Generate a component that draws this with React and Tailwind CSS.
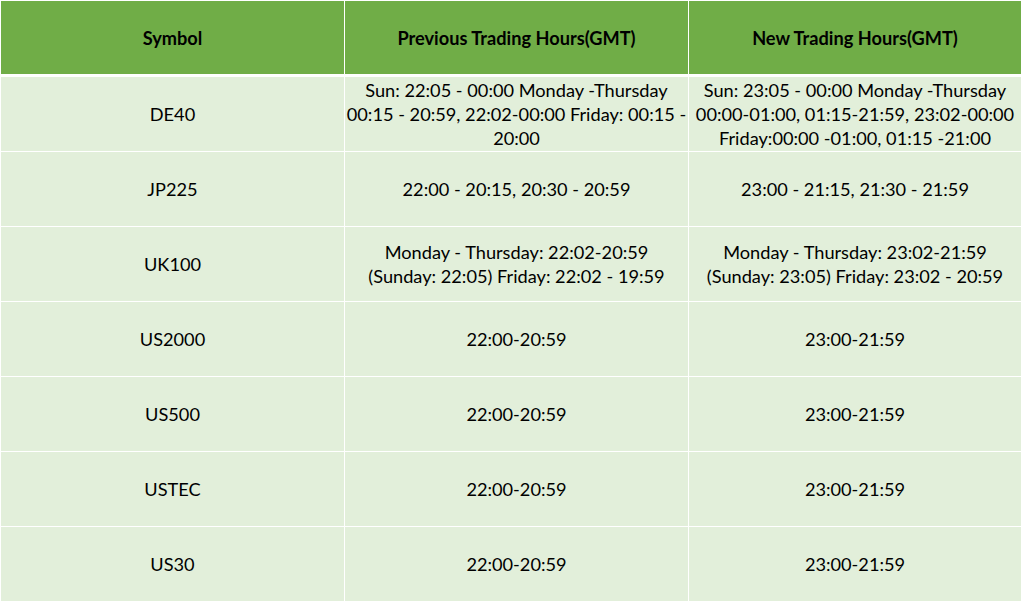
const rows = [
  {
    symbol: 'DE40',
    prev: ['Sun: 22:05 - 00:00 Monday -Thursday', '00:15 - 20:59, 22:02-00:00 Friday: 00:15 -', '20:00'],
    next: ['Sun: 23:05 - 00:00 Monday -Thursday', '00:00-01:00, 01:15-21:59, 23:02-00:00', 'Friday:00:00 -01:00, 01:15 -21:00'],
  },
  { symbol: 'JP225', prev: ['22:00 - 20:15, 20:30 - 20:59'], next: ['23:00 - 21:15, 21:30 - 21:59'] },
  {
    symbol: 'UK100',
    prev: ['Monday - Thursday: 22:02-20:59', '(Sunday: 22:05) Friday: 22:02 - 19:59'],
    next: ['Monday - Thursday: 23:02-21:59', '(Sunday: 23:05) Friday: 23:02 - 20:59'],
  },
  { symbol: 'US2000', prev: ['22:00-20:59'], next: ['23:00-21:59'] },
  { symbol: 'US500', prev: ['22:00-20:59'], next: ['23:00-21:59'] },
  { symbol: 'USTEC', prev: ['22:00-20:59'], next: ['23:00-21:59'] },
  { symbol: 'US30', prev: ['22:00-20:59'], next: ['23:00-21:59'] },
]

function Cell({ lines, className = '' }) {
  return (
    <div className={`flex flex-col items-center justify-center bg-[#e2efda] text-center ${className}`}>
      {lines.map((l) => (
        <span key={l} className="whitespace-nowrap">{l}</span>
      ))}
    </div>
  )
}

export default function App() {
  return (
    <div className="h-[603px] w-[1024px] bg-white pl-px pt-px font-['Lato',sans-serif] text-[18.2px] leading-[24px] text-black">
      <div className="flex w-[1020px] flex-col gap-px">
        <div className="mb-[2px] grid h-[73px] grid-cols-[343px_343px_332px] gap-px font-bold">
          <div className="flex items-center justify-center bg-[#70ad47]">Symbol</div>
          <div className="flex items-center justify-center bg-[#70ad47]">Previous Trading Hours(GMT)</div>
          <div className="flex items-center justify-center bg-[#70ad47]">New Trading Hours(GMT)</div>
        </div>
        {rows.map((r) => (
          <div key={r.symbol} className="grid h-[74px] grid-cols-[343px_343px_332px] gap-px">
            <Cell lines={[r.symbol]} />
            <Cell lines={r.prev} />
            <Cell lines={r.next} />
          </div>
        ))}
      </div>
    </div>
  )
}
